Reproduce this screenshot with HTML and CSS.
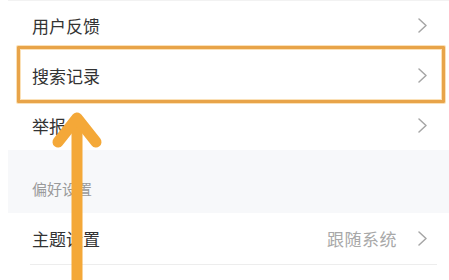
FILE: index.html
```html
<!DOCTYPE html>
<html lang="zh-CN">
<head>
<meta charset="utf-8">
<title>设置</title>
<link rel="stylesheet" href="styles.css">
</head>
<body>
<div class="page">
  <div class="group">
    <div class="row row-first"><span class="label">用户反馈</span><span class="right"><svg class="chev" viewBox="0 0 9 15"><polyline points="1,1 8,7.5 1,14"/></svg></span></div>
    <div class="row"><span class="label">搜索记录</span><span class="right"><svg class="chev" viewBox="0 0 9 15"><polyline points="1,1 8,7.5 1,14"/></svg></span></div>
    <div class="row"><span class="label">举报</span><span class="right"><svg class="chev" viewBox="0 0 9 15"><polyline points="1,1 8,7.5 1,14"/></svg></span></div>
  </div>
  <div class="section-head">偏好设置</div>
  <div class="group">
    <div class="row row-theme"><span class="label">主题设置</span><span class="right"><span class="value">跟随系统</span><svg class="chev" viewBox="0 0 9 15"><polyline points="1,1 8,7.5 1,14"/></svg></span></div>
    <div class="row row-sep"><span class="label">字体大小</span><span class="right"><svg class="chev" viewBox="0 0 9 15"><polyline points="1,1 8,7.5 1,14"/></svg></span></div>
  </div>
  <div class="highlight"></div>
  <svg class="arrow" viewBox="0 0 449 280" width="449" height="280">
    <line x1="77" y1="120" x2="77" y2="290"/>
    <polyline points="58,142 77,118 96,142"/>
  </svg>
</div>
</body>
</html>
```

FILE: styles.css
```css
html, body {
  margin: 0;
  padding: 0;
  background: #ffffff;
}
.page {
  position: relative;
  width: 449px;
  height: 280px;
  overflow: hidden;
  padding-left: 8px;
  box-sizing: border-box;
  font-family: "Noto Sans CJK SC", "Noto Sans", sans-serif;
  color: #333333;
}
.group {
  background: #ffffff;
}
.row {
  height: 50px;
  display: flex;
  align-items: center;
  justify-content: space-between;
  padding: 0 22px 0 24px;
  font-size: 17px;
}
.row-first {
  border-top: 1px solid #f2f2f2;
  height: 49px;
}
.row-theme {
  height: 51px;
}
.row-sep {
  border-top: 1px solid #ededed;
  margin: 0 12px 0 22px;
  padding-left: 2px;
  padding-right: 10px;
  align-items: flex-start;
  padding-top: 19px;
  box-sizing: border-box;
}
.label {
  line-height: 1;
}
.right {
  display: flex;
  align-items: center;
  gap: 21px;
}
.value {
  color: #a8a8a8;
  font-size: 17px;
  line-height: 1;
  letter-spacing: 0.5px;
}
.chev {
  width: 9px;
  height: 15px;
  fill: none;
  stroke: #a6a6a6;
  stroke-width: 1.5;
  stroke-linecap: round;
  stroke-linejoin: round;
}
.section-head {
  height: 63px;
  background: #f7f8fa;
  box-sizing: border-box;
  padding: 29px 0 0 24px;
  font-size: 15px;
  line-height: 20px;
  color: #9a9a9a;
}
.highlight {
  position: absolute;
  left: 17px;
  top: 46px;
  width: 428px;
  height: 57px;
  box-sizing: border-box;
  border: 3.5px solid #e8a449;
  box-shadow: 0 0 0 1px #fbe1b8, inset 0 0 0 1px #fbe1b8;
  border-radius: 1px;
}
.arrow {
  position: absolute;
  left: 0;
  top: 0;
  fill: none;
  stroke: #f4a838;
  stroke-width: 11;
  stroke-linecap: round;
  stroke-linejoin: round;
}
```
